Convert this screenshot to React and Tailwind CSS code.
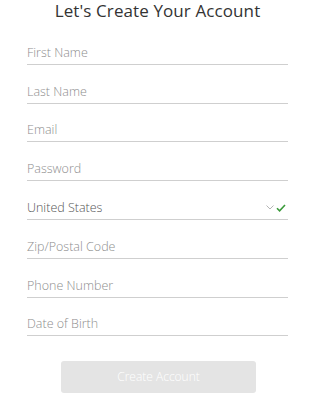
import React from "react";

const fields = [
  { label: "First Name" },
  { label: "Last Name" },
  { label: "Email" },
  { label: "Password" },
  { label: "United States", select: true },
  { label: "Zip/Postal Code" },
  { label: "Phone Number" },
  { label: "Date of Birth" },
];

export default function App() {
  return (
    <div className="w-[310px] h-[400px] bg-white overflow-hidden" style={{ fontFamily: '"Open Sans", sans-serif' }}>
      <div className="ml-[27px] w-[261px] flex flex-col">
        <h1 className="text-[17px] leading-[22px] text-[#333] text-center mt-0 tracking-[0.1px]">Let's Create Your Account</h1>
        <div className="mt-[4px] flex flex-col">
          {fields.map((f) => (
            <div
              key={f.label}
              className="h-[38.8px] border-b border-[#cfcfcf] flex items-end justify-between pb-[2px]"
            >
              <span
                className={
                  f.select
                    ? "text-[12.5px] leading-[18px] font-light text-[#555]"
                    : "text-[12.5px] leading-[18px] font-light text-[#8e8e8e]"
                }
              >
                {f.label}
              </span>
              {f.select && (
                <span className="flex items-center gap-[2px] mb-[5px] mr-[2px]">
                  <svg width="8" height="5" viewBox="0 0 8 5" fill="none">
                    <path d="M0.5 0.5 L4 4 L7.5 0.5" stroke="#b5b5b5" strokeWidth="1" />
                  </svg>
                  <svg width="10" height="8" viewBox="0 0 10 8" fill="none">
                    <path d="M1 4.2 L3.6 6.8 L9 1" stroke="#3a9a3a" strokeWidth="1.6" />
                  </svg>
                </span>
              )}
            </div>
          ))}
        </div>
        <button className="mt-[25px] ml-[34px] w-[195px] h-[32px] rounded-[3px] bg-[#e4e4e4] text-white text-[12px] font-light">
          Create Account
        </button>
      </div>
    </div>
  );
}
